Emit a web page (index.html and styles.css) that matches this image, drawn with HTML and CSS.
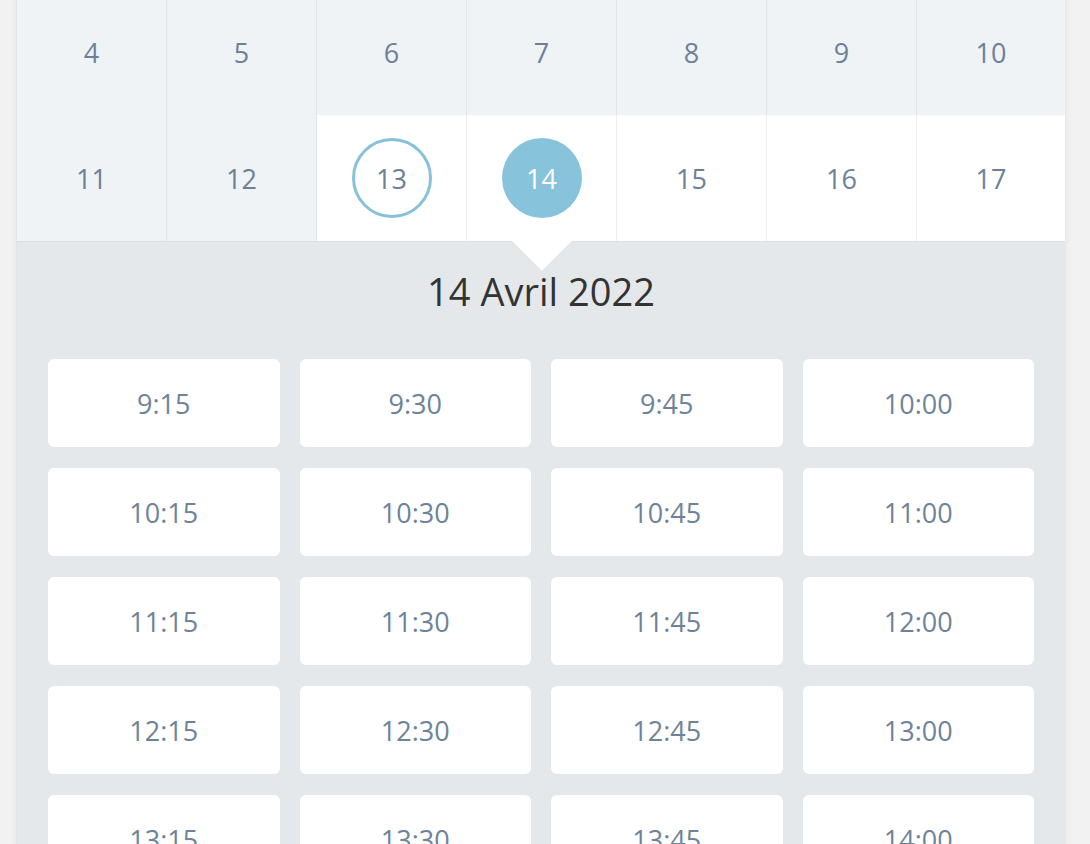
FILE: index.html
```html
<!DOCTYPE html>
<html lang="fr">
<head>
<meta charset="utf-8">
<title>Calendrier</title>
<link rel="stylesheet" href="styles.css">
</head>
<body>
<div class="card">
  <div class="calendar">
    <div class="day past">4</div>
    <div class="day past">5</div>
    <div class="day past">6</div>
    <div class="day past">7</div>
    <div class="day past">8</div>
    <div class="day past">9</div>
    <div class="day past last">10</div>
    <div class="day past">11</div>
    <div class="day past">12</div>
    <div class="day"><span class="today">13</span></div>
    <div class="day selected-cell"><span class="selected">14</span><span class="pointer"></span></div>
    <div class="day">15</div>
    <div class="day">16</div>
    <div class="day last">17</div>
  </div>
  <div class="panel">
    <div class="panel-title">14 Avril 2022</div>
    <div class="slots">
      <div class="slot">9:15</div>
      <div class="slot">9:30</div>
      <div class="slot">9:45</div>
      <div class="slot">10:00</div>
      <div class="slot">10:15</div>
      <div class="slot">10:30</div>
      <div class="slot">10:45</div>
      <div class="slot">11:00</div>
      <div class="slot">11:15</div>
      <div class="slot">11:30</div>
      <div class="slot">11:45</div>
      <div class="slot">12:00</div>
      <div class="slot">12:15</div>
      <div class="slot">12:30</div>
      <div class="slot">12:45</div>
      <div class="slot">13:00</div>
      <div class="slot">13:15</div>
      <div class="slot">13:30</div>
      <div class="slot">13:45</div>
      <div class="slot">14:00</div>
    </div>
  </div>
</div>
</body>
</html>
```
FILE: styles.css
```css
html, body {
  margin: 0;
  padding: 0;
  background: #f2f2f2;
  font-family: "Open Sans", "Noto Sans", sans-serif;
  overflow: hidden;
  height: 844px;
}

.card {
  margin: -11px 0 0 16px;
  width: 1048px;
  border-left: 1px solid #e0e4e8;
  border-right: 1px solid #e6e9ec;
  background: #ffffff;
  box-shadow: 0 0 8px rgba(0, 0, 0, 0.05);
}

.calendar {
  display: grid;
  grid-template-columns: repeat(6, 150px) 1fr;
  grid-auto-rows: 126px;
}

.day {
  display: flex;
  align-items: center;
  justify-content: center;
  font-size: 27px;
  color: #6c8198;
  background: #ffffff;
  border-right: 1px solid #eaeef2;
  position: relative;
}

.day.past {
  background: #eff3f6;
  border-right-color: #e0e5ea;
}

.day.last {
  border-right: none;
}

.today,
.selected {
  width: 80px;
  height: 80px;
  border-radius: 50%;
  box-sizing: border-box;
  display: flex;
  align-items: center;
  justify-content: center;
}

.today {
  border: 3px solid #86c2da;
}

.selected {
  background: #87c3db;
  color: #ffffff;
}

.pointer {
  position: absolute;
  left: 50%;
  bottom: -30px;
  margin-left: -30px;
  width: 0;
  height: 0;
  border-left: 30px solid transparent;
  border-right: 30px solid transparent;
  border-top: 30px solid #ffffff;
  z-index: 2;
  filter: drop-shadow(0 1px 0 #dde1e5);
}

.panel {
  background: #e4e8eb;
  border-top: 1px solid #dadfe3;
  padding: 23px 31px 40px;
}

.panel-title {
  text-align: center;
  font-size: 38px;
  line-height: 52px;
  color: #333333;
  margin-bottom: 42px;
}

.slots {
  display: grid;
  grid-template-columns: repeat(4, 1fr);
  column-gap: 20px;
  row-gap: 21px;
}

.slot {
  height: 88px;
  background: #ffffff;
  border-radius: 6px;
  display: flex;
  align-items: center;
  justify-content: center;
  font-size: 27px;
  color: #6e8399;
}
```
